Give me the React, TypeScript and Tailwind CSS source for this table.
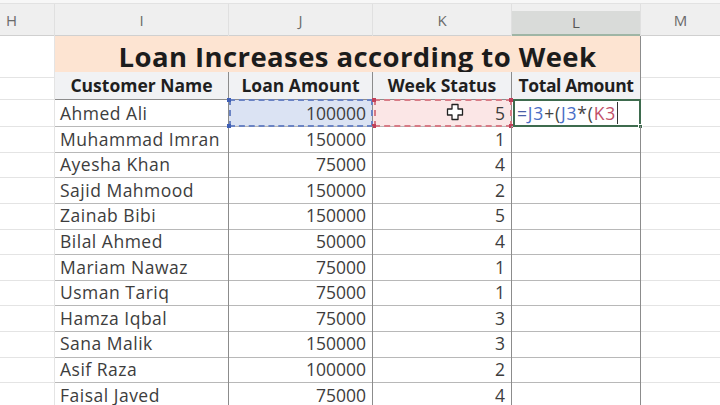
import React from "react";

const rows: [string, string, string][] = [
  ["Ahmed Ali", "100000", "5"],
  ["Muhammad Imran", "150000", "1"],
  ["Ayesha Khan", "75000", "4"],
  ["Sajid Mahmood", "150000", "2"],
  ["Zainab Bibi", "150000", "5"],
  ["Bilal Ahmed", "50000", "4"],
  ["Mariam Nawaz", "75000", "1"],
  ["Usman Tariq", "75000", "1"],
  ["Hamza Iqbal", "75000", "3"],
  ["Sana Malik", "150000", "3"],
  ["Asif Raza", "100000", "2"],
  ["Faisal Javed", "75000", "4"],
];

const cols = "grid grid-cols-[55px_174px_144px_139px_129px_79px]";

function Cursor() {
  return (
    <svg width="18" height="18" viewBox="0 0 18 18" className="absolute left-[73px] top-[3px]">
      <path
        d="M6 1.5h6v4.5h4.5v6H12v4.5H6V12H1.5V6H6z"
        fill="#ffffff"
        stroke="#222"
        strokeWidth="1.3"
        strokeLinejoin="round"
      />
    </svg>
  );
}

export default function App() {
  return (
    <div
      className="w-[720px] h-[405px] overflow-hidden bg-white text-[#3d3d3d]"
      style={{ fontFamily: "'Open Sans', Lato, sans-serif" }}
    >
      {/* top strip */}
      <div className="h-[4px] bg-[#f7f7f7] border-b border-[#e2e2e2]" />
      {/* column headers */}
      <div className={`${cols} h-[32px] bg-[#efefef] text-[15px] text-[#6a6a6a] border-b border-[#d0d0d0]`}>
        <div className="flex items-center pl-[6px] border-r border-[#e0e0e0]">H</div>
        <div className="flex items-center justify-center border-r border-[#e0e0e0]">I</div>
        <div className="flex items-center justify-center border-r border-[#e0e0e0]">J</div>
        <div className="flex items-center justify-center border-r border-[#e0e0e0]">K</div>
        <div className="flex flex-col border-r border-[#e0e0e0]">
          <div className="h-[7px]" />
          <div className="flex-1 flex items-center justify-center bg-[#d9dbd9] text-[#555] border-b-2 border-[#9fb5a5]">L</div>
        </div>
        <div className="flex items-center justify-center">M</div>
      </div>
      {/* title row */}
      <div className={`${cols} h-[36px]`}>
        <div className="border-r border-[#8c8c8c] border-b border-[#e4e4e4]" />
        <div className="col-span-4 flex items-center justify-center pl-[20px] bg-[#fde4d2] border-r border-b border-[#8c8c8c] text-[27.5px] font-bold text-[#1c1c1c] tracking-[0.4px] whitespace-nowrap">
          Loan Increases according to Week
        </div>
        <div className="border-b border-[#e4e4e4]" />
      </div>
      {/* header row */}
      <div className={`${cols} h-[28px] text-[17.5px] font-bold text-[#1f1f1f] whitespace-nowrap`}>
        <div className="border-r border-[#8c8c8c] border-b border-[#e4e4e4]" />
        <div className="flex items-center justify-center bg-[#f1f2f4] border-r border-b border-[#8c8c8c]">Customer Name</div>
        <div className="flex items-center justify-center bg-[#f1f2f4] border-r border-b border-[#8c8c8c]">Loan Amount</div>
        <div className="flex items-center justify-center bg-[#f1f2f4] border-r border-b border-[#8c8c8c]">Week Status</div>
        <div className="flex items-center justify-center overflow-hidden bg-[#f1f2f4] border-r border-b border-[#8c8c8c] tracking-[-0.4px]">Total Amount</div>
        <div className="border-b border-[#e4e4e4]" />
      </div>
      {/* data rows */}
      {rows.map(([name, amt, wk], i) => (
        <div key={name} className={`${cols} h-[25.6px] text-[17.5px]`}>
          <div className="border-r border-[#8c8c8c] border-b border-[#e4e4e4]" />
          <div className="flex items-center pl-[5px] border-r border-b border-r-[#8c8c8c] border-b-[#b8b8b8] whitespace-nowrap tracking-[0.5px]">
            {name}
          </div>
          <div
            className={`relative flex items-center justify-end pr-[6px] border-r border-b border-r-[#8c8c8c] border-b-[#b8b8b8] ${
              i === 0 ? "bg-[#dbe3f3]" : ""
            }`}
          >
            {amt}
            {i === 0 && (
              <>
                <div className="absolute left-0 right-[-1px] top-[-1px] bottom-[-1px] border-2 border-dashed border-[#6b84c4]" />
                <div className="absolute left-[-2px] top-[-2px] w-[4px] h-[4px] bg-[#3f5fb5]" />
                <div className="absolute left-[-2px] bottom-[-2px] w-[4px] h-[4px] bg-[#3f5fb5]" />
              </>
            )}
          </div>
          <div
            className={`relative flex items-center justify-end pr-[6px] border-r border-b border-r-[#8c8c8c] border-b-[#b8b8b8] ${
              i === 0 ? "bg-[#fbe6e6]" : ""
            }`}
          >
            {wk}
            {i === 0 && (
              <>
                <div className="absolute left-[1px] right-[-1px] top-[-1px] bottom-[-1px] border-2 border-dashed border-[#d77b86]" />
                <div className="absolute left-[-1px] top-[-2px] w-[4px] h-[4px] bg-[#c0405a]" />
                <div className="absolute left-[-1px] bottom-[-2px] w-[4px] h-[4px] bg-[#c0405a]" />
                <div className="absolute right-[-2px] top-[-2px] w-[4px] h-[4px] bg-[#c0405a]" />
                <div className="absolute right-[-2px] bottom-[-2px] w-[4px] h-[4px] bg-[#c0405a]" />
                <Cursor />
              </>
            )}
          </div>
          <div className="relative flex items-center pl-[5px] border-r border-b border-r-[#8c8c8c] border-b-[#b8b8b8] text-[17.5px] tracking-[0.8px]">
            {i === 0 && (
              <>
                <span className="text-[#4a5fa8]">=</span>
                <span className="text-[#4a6ec6]">J3</span>
                <span className="text-[#444]">+(</span>
                <span className="text-[#4a6ec6]">J3</span>
                <span className="text-[#444]">*(</span>
                <span className="text-[#c2506a]">K3</span>
                <span className="ml-[1px] h-[22px] w-[1px] bg-[#333]" />
                <div className="absolute left-[1px] right-[-1px] top-[-1px] bottom-[-1px] border-2 border-[#3e6b4e]" />
                <div className="absolute right-[-3px] bottom-[-3px] w-[5px] h-[5px] bg-[#3e6b4e] border border-white" />
              </>
            )}
          </div>
          <div className="border-b border-[#e4e4e4]" />
        </div>
      ))}
    </div>
  );
}
